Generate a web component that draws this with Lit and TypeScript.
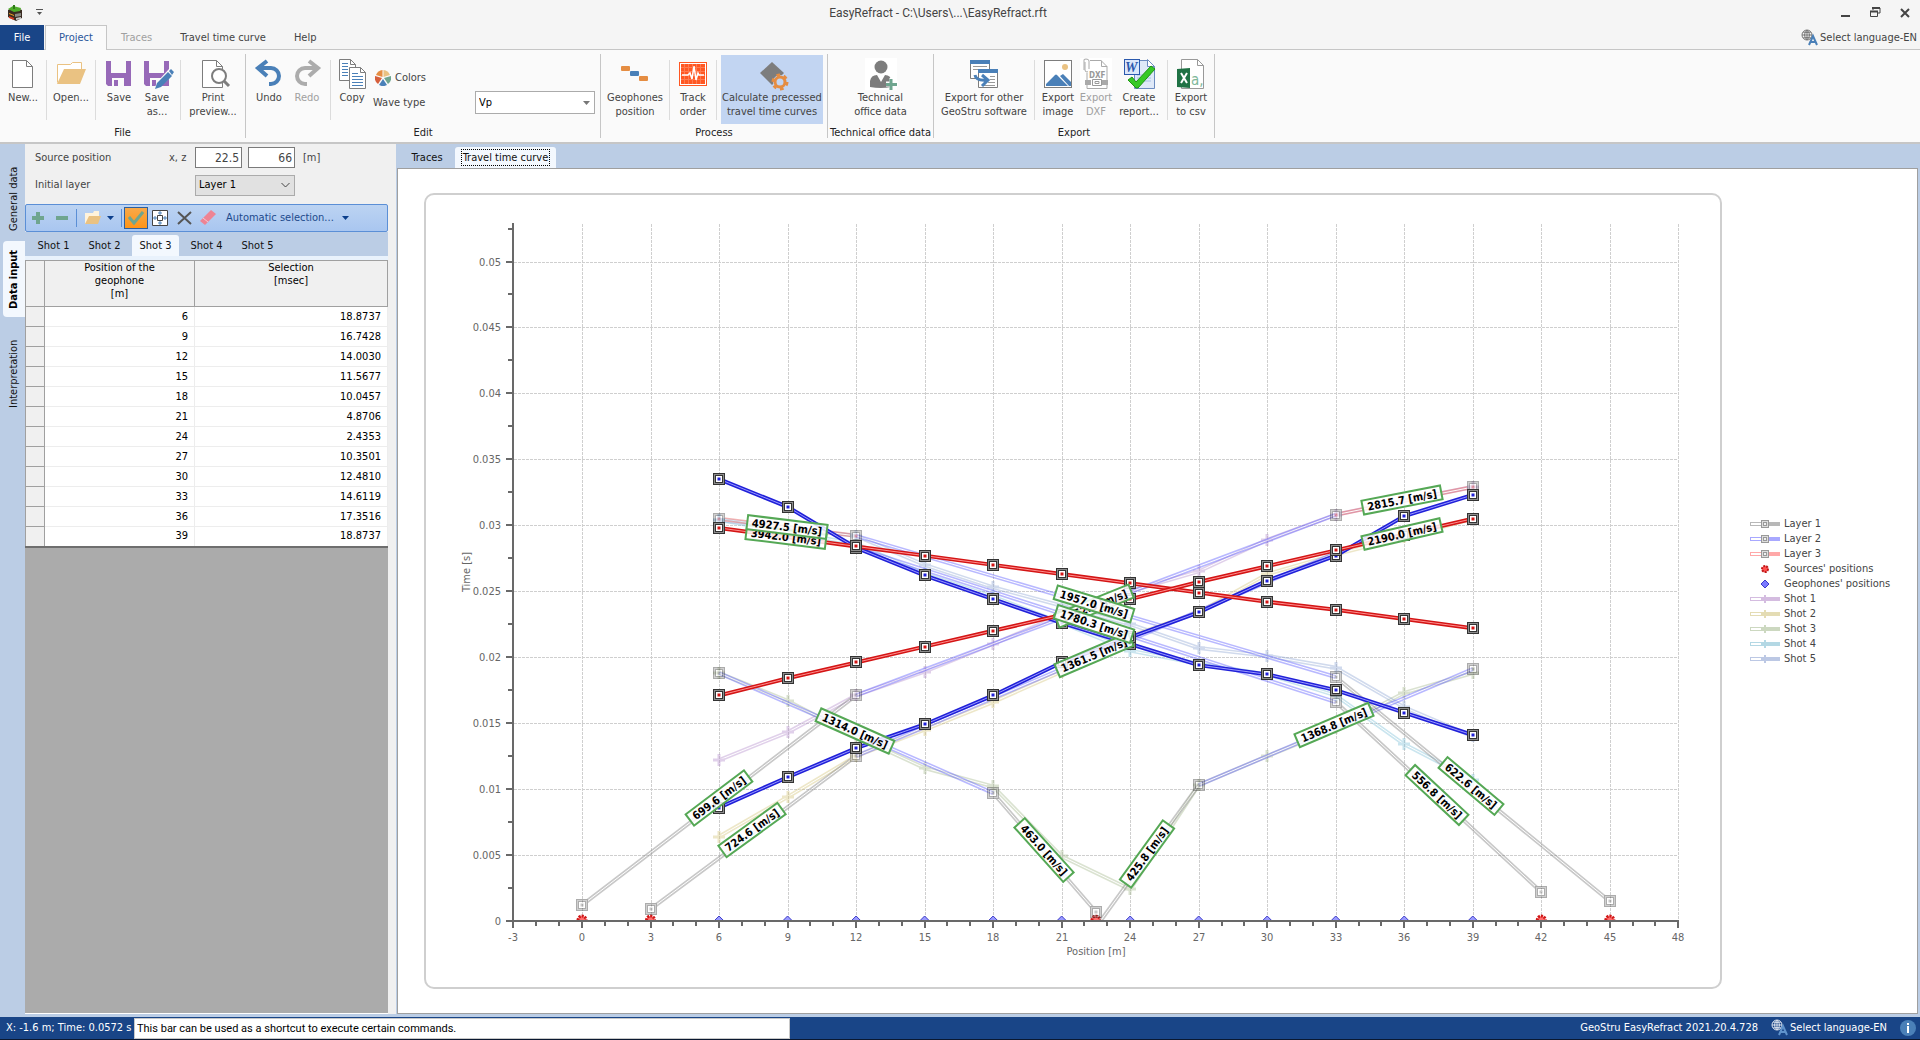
import { html, svg, css, LitElement } from "lit";
import { customElement, property, state } from "lit/decorators.js";
import { classMap } from "lit/directives/class-map.js";

type Point = [number, number];

type Curve = {
    color: string;
    core: string;
    marker: 'box' | 'cross' | 'none';
    faded: boolean;
    points: Point[];
}

type SpeedLabel = {
    text: string;
    x: number;
    y: number;
    angle: number;
}

const icons = {
    new: svg`<path d="M5.5 2.5h14l6 6v21h-20z" fill="#fff" stroke="#7d7d7d"/><path d="M19.5 2.5v6h6" fill="none" stroke="#7d7d7d"/>`,
    open: svg`<path d="M2.500 24.500v-18h13l2-2h9v8" fill="#fff" stroke="#eac282"/><path d="M2 26l7-15h22l-6 15z" fill="#eac282"/>`,
    save: svg`<path d="M3 3h25v25H5l-2-2z" fill="#9769b8"/><path d="M8 3h15v12H8zM9 20h12v8H9z" fill="#fafafa"/><path d="M11 22h4v6h-4z" fill="#9769b8"/>`,
    saveAs: svg`<path d="M3 3h25v25H5l-2-2z" fill="#9769b8"/><path d="M8 3h15v12H8zM9 20h12v8H9z" fill="#fafafa"/><path d="M11 22h4v6h-4z" fill="#9769b8"/>
        <path d="M13 32l3-8L28 11l5 5-13 12z" fill="#fafafa"/><path d="M14 31l2-6 11-11 4 4-11 11zM28 13l2-2 3 3-2 3z" fill="#4a80b8"/>`,
    print: svg`<path d="M5.500 2.500h14l6 6v21h-20z" fill="#fff" stroke="#7d7d7d"/><path d="M19.500 2.500v6h6" fill="none" stroke="#7d7d7d"/>
        <circle cx="22" cy="18" r="7" fill="#fff" stroke="#7d7d7d" stroke-width="2"/><path d="M27 23l5 5" stroke="#7d7d7d" stroke-width="3"/>`,
    undo: svg`<path d="M14 3L5 10l9 8M6 10h12a8 8 0 0 1 0 16h-2" fill="none" stroke="#4a80b8" stroke-width="4"/>`,
    redo: svg`<path d="M18 3l9 7-9 8M26 10H14a8 8 0 0 0 0 16h2" fill="none" stroke="#acacac" stroke-width="4"/>`,
    copy: svg`<path d="M3.500 1.500h11l5 5v16h-16z" fill="#fff" stroke="#7d7d7d"/><path d="M14.500 1.500v5h5" fill="none" stroke="#7d7d7d"/>
        <path d="M6 5.500h6M6 8.500h6M6 11.500h6M6 14.500h6M6 17.500h6" stroke="#4a80b8"/>
        <path d="M13.500 9.500h11l5 5v16h-16z" fill="#fff" stroke="#7d7d7d"/><path d="M24.500 9.500v5h5" fill="none" stroke="#7d7d7d"/>
        <path d="M16 15.500h6M16 18.500h11M16 21.500h11M16 24.500h11M16 27.500h11" stroke="#4a80b8"/>`,
    geophones: svg`<rect x="2" y="8" width="9" height="5" rx="1" fill="#e58d42"/><rect x="11" y="13" width="9" height="5" rx="1" fill="#4a80b8"/><rect x="20" y="18" width="9" height="5" rx="1" fill="#e58d42"/>`,
    track: svg`<rect x="2.500" y="4.500" width="27" height="23" fill="#fff" stroke="#ff5722"/><rect x="4" y="6" width="24" height="20" fill="#ff5722"/>
        <path d="M7.500 6v20M11.500 6v20M15.500 6v20M19.500 6v20M23.500 6v20M4 9.500h24M4 13.500h24M4 17.500h24M4 21.500h24" stroke="#ff7a50"/>
        <path d="M5 17h6l2-2 2 6 2-13 2 14 2-7 1 2h5" fill="none" stroke="#fff" stroke-width="1.500"/>`,
    calculate: svg`<path d="M16 4l12 11-12 12L4 15z" fill="#7d7d7d"/><circle cx="24" cy="24" r="7" fill="#c2d5f2"/>
        <circle cx="24" cy="24" r="5" fill="none" stroke="#e58d42" stroke-width="3"/><circle cx="24" cy="24" r="7" fill="none" stroke="#e58d42" stroke-width="3" stroke-dasharray="3.600 3.730"/>`,
    technical: svg`<rect width="32" height="32" fill="#fff"/><circle cx="16" cy="9" r="6.500" fill="#7d7d7d"/><path d="M5 29v-6q1-6 7-6l4 7 4-7q6 0 6 6v6q-10 2-21 0z" fill="#7d7d7d"/>
        <path d="M27 20v12M21 26h12" stroke="#fff" stroke-width="5"/><path d="M26 21v11M21 26.500h11" stroke="#6fa58f" stroke-width="3"/>`,
    exportOther: svg`<path d="M2.500 2.500h19v18h-19z" fill="#fff" stroke="#7d7d7d"/><path d="M2 2h20v4H2z" fill="#4a80b8"/><path d="M5 8.500h14M5 11.500h14" stroke="#999"/>
        <path d="M10.500 11.500h19v18h-19z" fill="#fff" stroke="#7d7d7d"/><path d="M10 11h20v4H10z" fill="#4a80b8"/><path d="M22 18.500h5M22 21.500h5M20 24.500h7M16 27.500h11" stroke="#999"/>
        <path d="M7 17q1 6 12 5M14 17l6 5-6 6" fill="none" stroke="#4a80b8" stroke-width="3"/>`,
    image: svg`<rect x="2.500" y="2.500" width="27" height="27" fill="#fff" stroke="#7d7d7d"/><circle cx="23" cy="9" r="3" fill="#eac282"/><path d="M4 28v-2l9-9q1-1 2 0l11 11zM18 18l3-2 8 8v4h-2z" fill="#4a80b8"/>`,
    dxf: svg`<rect width="32" height="32" fill="#fff"/><path d="M10 2.500h11l6 6v22H7V15" fill="none" stroke="#aaa"/><path d="M21.500 2.500v6H27M5 4v8q0 2 2 2t2-2V3q0-2-3-2t-2 2v9" fill="none" stroke="#aaa"/>
        <rect x="8" y="11" width="18" height="9" fill="#fff"/><text x="9" y="20" class="tiny" fill="#999">DXF</text><path d="M5 22h6v5H5zM22 22h6v5h-6z" fill="#aaa"/><path d="M12.500 21.500h9v6h-9z" fill="#fff" stroke="#999"/><path d="M15 23.500h4v2h-4z" fill="none" stroke="#999"/>`,
    report: svg`<path d="M11.500 2.500h14l6 6v22h-20z" fill="#dfe9f8" stroke="#6d8cc0"/><path d="M24.500 1.500v7h7z" fill="#fff" stroke="#6d8cc0"/><path d="M14 17h14M14 20h14M14 23h14" stroke="#a9c0e4"/>
        <rect x="1.500" y="1.500" width="15" height="15" fill="#dce7fa" stroke="#2b59ad"/><text x="2" y="14" class="word" fill="#2b59ad">W</text>
        <path d="M5 22l4-3 4 5L28 8l4 3-17 19h-2z" fill="#37c926" stroke="#1f9414"/>`,
    csv: svg`<path d="M6.500 1.500h16l6 6v23h-22z" fill="#fff" stroke="#999"/><path d="M22.500 1.500v6h6" fill="none" stroke="#999"/><path d="M2 11l13-1v20L2 29z" fill="#207245"/>
        <path d="M6 15l6 10M12 15L6 25" stroke="#fff" stroke-width="2"/><text x="16" y="27" class="a" fill="#7fb89a">a,</text>`,
};

const velocityLabels: SpeedLabel[] = [
    { text: '3942.0 [m/s]', x: 360, y: 342, angle: 7 },
    { text: '4927.5 [m/s]', x: 361, y: 332, angle: 7 },
    { text: '2815.7 [m/s]', x: 976, y: 305, angle: -11 },
    { text: '2190.0 [m/s]', x: 976, y: 339, angle: -13 },
    { text: '1352.3 [m/s]', x: 668, y: 411, angle: -22 },
    { text: '1361.5 [m/s]', x: 668, y: 460, angle: -23 },
    { text: '1957.0 [m/s]', x: 668, y: 409, angle: 17 },
    { text: '1780.3 [m/s]', x: 668, y: 429, angle: 18 },
    { text: '1314.0 [m/s]', x: 429, y: 536, angle: 24 },
    { text: '699.6 [m/s]', x: 293, y: 603, angle: -37 },
    { text: '724.6 [m/s]', x: 326, y: 635, angle: -36 },
    { text: '463.0 [m/s]', x: 618, y: 655, angle: 48 },
    { text: '425.8 [m/s]', x: 721, y: 659, angle: -54 },
    { text: '1368.8 [m/s]', x: 908, y: 530, angle: -23 },
    { text: '622.6 [m/s]', x: 1045, y: 591, angle: 40 },
    { text: '556.8 [m/s]', x: 1011, y: 600, angle: 43 },
];

const faded = (color: string, marker: Curve['marker'], points: Point[]): Curve => ({ color, core: '#fff', marker, faded: true, points });
const solid = (color: string, core: string, points: Point[]): Curve => ({ color, core, marker: 'box', faded: false, points });

const GREY = '#777', BLUE = '#5050ff', RED = '#e04040';

// points are [position in m, time in ms]
const curves: Curve[] = [
    faded('#b48ccc', 'cross', [[6, 12.2], [9, 14.3], [12, 17.1], [15, 18.9], [18, 21.0], [21, 23.2], [24, 25.0], [27, 26.5], [30, 28.9], [33, 30.8], [36, 31.9], [39, 32.9]]),
    faded('#d4c478', 'cross', [[6, 6.4], [9, 9.4], [12, 12.5], [15, 14.5], [18, 16.6], [21, 18.9], [24, 21.6], [27, 23.4], [30, 26.3], [33, 27.8], [36, 29.1], [39, 30.5]]),
    faded('#a4b88c', 'cross', [[6, 18.8], [9, 16.7], [12, 14.0], [15, 11.6], [18, 10.2], [21, 4.9], [24, 2.4], [27, 10.3], [30, 12.5], [33, 14.6], [36, 17.3], [39, 18.8]]),
    faded('#7cc0d8', 'cross', [[6, 30.4], [12, 28.6], [15, 26.3], [18, 24.6], [21, 22.6], [24, 20.5], [27, 19.5], [30, 18.7], [33, 17.1], [36, 13.4], [39, 10.7]]),
    faded('#8ca4d4', 'cross', [[6, 30.4], [12, 29.2], [15, 27.0], [18, 25.3], [21, 23.9], [24, 22.5], [27, 20.7], [30, 20.1], [33, 19.2], [36, 16.2], [39, 14.0]]),
    faded(BLUE, 'none', [[12, 17.1], [33, 30.8]]),
    faded(BLUE, 'none', [[12, 12.5], [33, 27.9]]),
    faded(BLUE, 'none', [[6, 18.8], [18, 9.7]]),
    faded(BLUE, 'none', [[27, 10.3], [39, 19.1]]),
    faded(BLUE, 'none', [[12, 29.2], [33, 18.5]]),
    faded(BLUE, 'none', [[12, 28.3], [33, 16.6]]),
    faded(RED, 'box', [[6, 30.5], [12, 29.2]]),
    faded(RED, 'box', [[33, 30.8], [39, 32.9]]),
    faded(GREY, 'box', [[0, 1.2], [12, 17.1]]),
    faded(GREY, 'box', [[3, 0.9], [12, 12.5]]),
    faded(GREY, 'box', [[18, 9.7], [22.5, 0.7]]),
    faded(GREY, 'none', [[22.7, 0], [27, 10.3]]),
    faded(GREY, 'box', [[33, 18.5], [45, 1.5]]),
    faded(GREY, 'box', [[33, 16.6], [42, 2.2]]),
    faded(GREY, 'box', [[6, 18.8]]),
    faded(GREY, 'box', [[27, 10.3]]),
    faded(GREY, 'box', [[39, 19.1]]),
    solid('#2020d8', '#9a9aff', [[6, 33.5], [9, 31.4], [12, 28.3], [15, 26.2], [18, 24.4], [21, 22.6], [24, 21.0], [27, 19.4], [30, 18.7], [33, 17.5], [36, 15.8], [39, 14.1]]),
    solid('#2020d8', '#9a9aff', [[6, 8.6], [9, 10.9], [12, 13.1], [15, 14.9], [18, 17.1], [21, 19.6], [24, 21.5], [27, 23.4], [30, 25.8], [33, 27.7], [36, 30.7], [39, 32.3]]),
    solid('#d41414', '#ff9090', [[6, 29.8], [12, 28.4], [15, 27.7], [18, 27.0], [21, 26.3], [24, 25.6], [27, 24.9], [30, 24.2], [33, 23.6], [36, 22.9], [39, 22.2]]),
    solid('#d41414', '#ff9090', [[6, 17.1], [9, 18.4], [12, 19.6], [15, 20.8], [18, 22.0], [21, 23.2], [24, 24.4], [27, 25.7], [30, 26.9], [33, 28.1], [36, 29.3], [39, 30.5]]),
];

@customElement("travel-chart")
export class TravelChart extends LitElement {
    static styles = css`
        :host {
            display: block;
        }
        svg {
            display: block;
            width: 100%;
            font: 11px "DejaVu Sans Condensed", "DejaVu Sans", sans-serif;
        }
        text {
            fill: #666;
        }
        .end {
            text-anchor: end;
        }
        .mid {
            text-anchor: middle;
        }
        .grid {
            stroke: #cfcfcf;
            stroke-dasharray: 3 1;
            fill: none;
            shape-rendering: crispEdges;
        }
        .axis {
            stroke: #696969;
            stroke-width: 2;
            fill: none;
            shape-rendering: crispEdges;
        }
        .outer {
            fill: none;
            stroke-width: 4;
        }
        .core {
            fill: none;
            stroke-width: 1;
        }
        .faded {
            opacity: 0.4;
        }
        .speed rect {
            fill: rgba(255, 255, 255, 0.85);
            stroke: #55a855;
            stroke-width: 2;
        }
        .speed text {
            fill: #000;
            font-weight: bold;
        }
    `;

    px(m: number) {
        return 156 + m * 22.84;
    }
    py(ms: number) {
        return 726 - ms * 13.19;
    }

    marker(kind: string, color: string, px: number, py: number) {
        const x = Math.round(px);
        const y = Math.round(py);
        if (kind === 'cross') {
            return svg`<path d="M${x - 6} ${y}h12M${x} ${y - 6}v12" stroke=${color} stroke-width="3"/>`;
        }
        return svg`
            <rect x=${x - 5.5} y=${y - 5.5} width="11" height="11" fill="#8c8c8c" stroke="#333"/>
            <rect x=${x - 3.5} y=${y - 3.5} width="7" height="7" fill="#fff" stroke="#333"/>
            <rect x=${x - 1.5} y=${y - 1.5} width="3" height="3" fill=${color}/>`;
    }

    curve(c: Curve) {
        const line = c.points.map(([m, t]) => `${this.px(m)},${this.py(t)}`).join(' ');
        return svg`
            <g class=${c.faded ? 'faded' : ''}>
                <polyline class="outer" points=${line} stroke=${c.color}/>
                <polyline class="core" points=${line} stroke=${c.core}/>
                ${c.marker === 'none' ? '' : c.points.map(([m, t]) => this.marker(c.marker, c.color, this.px(m), this.py(t)))}
            </g>`;
    }

    render() {
        const xMajor = Array.from({ length: 18 }, (_, i) => -3 + i * 3);
        const xMinor = Array.from({ length: 52 }, (_, i) => -3 + i);
        const yMajor = Array.from({ length: 11 }, (_, i) => i * 5);
        const yMinor = Array.from({ length: 11 }, (_, i) => 2.5 + i * 5);
        return html`
            <svg viewBox="0 0 1294 792" role="img" aria-label="Travel time curve">
                <defs>
                    <clipPath id="plot"><rect x="80" y="20" width="1180" height="706"/></clipPath>
                </defs>
                ${xMajor.slice(1).map(m => svg`<path class="grid" d="M${Math.round(this.px(m)) + 0.5} 29V726"/>`)}
                ${yMajor.slice(1).map(t => svg`<path class="grid" d="M88 ${Math.round(this.py(t)) + 0.5}H1252"/>`)}
                <g clip-path="url(#plot)">
                    ${[0, 3, 22.5, 42, 45].map(m => svg`<circle cx=${this.px(m)} cy="725" r="4" fill="#ff7070" stroke="#d01818" stroke-width="3" stroke-dasharray="2 1"/>`)}
                    ${Array.from({ length: 12 }, (_, i) => 6 + i * 3).map(m => svg`<path d="M${this.px(m) - 5} 726l5-5 5 5-5 5z" fill="#9a9aff" stroke="#3c3cc8"/>`)}
                    ${curves.map(c => this.curve(c))}
                </g>
                <path class="axis" d="M87 28V727M80 726H1253"/>
                ${xMajor.map(m => svg`<path class="axis" d="M${Math.round(this.px(m))} 726v7"/><text class="mid" x=${Math.round(this.px(m))} y="746">${m}</text>`)}
                ${xMinor.map(m => svg`<path class="axis" d="M${Math.round(this.px(m))} 726v5"/>`)}
                ${yMajor.map(t => svg`<path class="axis" d="M80 ${Math.round(this.py(t))}h7"/><text class="end" x="75" y=${Math.round(this.py(t)) + 4}>${t / 1000}</text>`)}
                ${yMinor.map(t => svg`<path class="axis" d="M82 ${Math.round(this.py(t))}h5"/>`)}
                <text class="mid" x="670" y="760">Position [m]</text>
                <text class="mid" transform="translate(44 377) rotate(-90)">Time [s]</text>
                ${velocityLabels.map(l => {
                    const w = l.text.length > 11 ? 80 : 73;
                    return svg`
                        <g class="speed" transform="translate(${l.x} ${l.y}) rotate(${l.angle})">
                            <rect x=${-w / 2} y="-7" width=${w} height="14"/>
                            <text class="mid" y="4">${l.text}</text>
                        </g>`;
                })}
            </svg>
        `;
    }
}

@customElement("ribbon-button")
export class RibbonButton extends LitElement {
    static styles = css`
        :host {
            display: block;
        }
        button {
            display: flex;
            flex-direction: column;
            align-items: center;
            gap: 1px;
            width: 100%;
            height: 69px;
            padding: 3px 0 0;
            border: none;
            background: none;
            font: 11px/14px "DejaVu Sans Condensed", "DejaVu Sans", sans-serif;
            color: #444;
            white-space: pre;
        }
        button:disabled {
            color: #a0a0a0;
        }
        .active {
            background: #c2d5f2;
        }
        svg {
            width: 32px;
            height: 32px;
            overflow: visible;
            flex: none;
        }
        .tiny {
            font: bold 8px "DejaVu Sans Condensed", sans-serif;
        }
        .word {
            font: italic bold 14px "Liberation Serif", serif;
        }
        .a {
            font: 15px "DejaVu Sans Condensed", sans-serif;
        }
    `;
    @property() icon: keyof typeof icons = 'new';
    @property() label = '';
    @property({ type: Boolean }) active = false;
    @property({ type: Boolean }) disabled = false;

    render() {
        return html`<button class=${classMap({ active: this.active })} ?disabled=${this.disabled}><svg viewBox="0 0 32 32">${icons[this.icon]}</svg><span>${this.label}</span></button>`;
    }
}

const globe = svg`<circle cx="6" cy="6" r="5" fill="none"/><path d="M6 1v10M1 6h10M2 3q4 1 8 0M2 9q4-1 8 0M6 1q-5 5 0 10M6 1q5 5 0 10" fill="none"/>`;

@customElement("app-root")
export class AppRoot extends LitElement {
    static styles = css`
        :host {
            display: flex;
            flex-direction: column;
            min-height: 100vh;
            font: 11px/14px "DejaVu Sans Condensed", "DejaVu Sans", sans-serif;
            color: #444;
            background: #bbcde5;
        }
        * {
            box-sizing: border-box;
        }
        button, input, select {
            font: inherit;
            color: inherit;
            margin: 0;
        }
        button {
            border: none;
            background: none;
            padding: 0;
        }
        svg {
            display: block;
            flex: none;
        }
        .titlebar {
            display: grid;
            grid-template-columns: 1fr auto 1fr;
            align-items: center;
            height: 25px;
            padding: 0 10px 0 8px;
            background: #f5f5f5;
        }
        .title {
            padding-right: 42px;
            font: 12px/16px Roboto, sans-serif;
        }
        .quick {
            display: flex;
            align-items: center;
            gap: 14px;
        }
        .window {
            display: flex;
            justify-content: flex-end;
            gap: 19px;
        }
        .menubar {
            display: flex;
            height: 25px;
            background: #f5f5f5;
            box-shadow: inset 0 -1px #c6c6c6;
        }
        .menubar .tab {
            padding: 0 14px;
        }
        .menubar .file {
            width: 44px;
            padding: 0;
            background: #194587;
            color: #fff;
        }
        .menubar .current {
            width: 62px;
            margin-left: 1px;
            padding: 0;
            border: 1px solid #c6c6c6;
            border-bottom: none;
            background: #fafafa;
            color: #2a579a;
        }
        .menubar .off {
            color: #a0a0a0;
        }
        .language {
            display: flex;
            align-items: center;
            gap: 2px;
        }
        .menubar .language {
            margin-left: auto;
            padding-right: 3px;
        }
        .ribbon {
            display: flex;
            height: 94px;
            padding: 4px 0;
            background: #fafafa;
            border-bottom: 2px solid #c6c6c6;
        }
        .group {
            display: flex;
            flex-direction: column;
            justify-content: space-between;
            border-right: 1px solid #c6c6c6;
        }
        .group .row {
            display: flex;
            padding-top: 1px;
        }
        .caption {
            text-align: center;
            color: #222;
            line-height: 10px;
            white-space: nowrap;
        }
        .sep {
            width: 1px;
            height: 60px;
            margin-top: 5px;
            background: #dcdcdc;
        }
        .inset {
            display: flex;
            padding: 0 4px;
        }
        .w38 { width: 38px; }
        .w42 { width: 42px; }
        .w46 { width: 46px; }
        .w48 { width: 48px; }
        .w64 { width: 64px; }
        .w68 { width: 68px; }
        .w100 { width: 100px; }
        .w102 { width: 102px; }
        .w105 { width: 105px; }
        .wave {
            display: grid;
            grid-template-columns: 102px 120px;
            align-content: start;
            row-gap: 4px;
            align-items: center;
            padding: 14px 5px 0 0;
        }
        .colors {
            grid-column: 1 / 3;
            display: flex;
            align-items: center;
            gap: 4px;
            padding-left: 2px;
            height: 18px;
        }
        .combo {
            display: grid;
            align-items: center;
        }
        .combo > * {
            grid-area: 1 / 1;
        }
        .combo svg {
            justify-self: end;
            margin-right: 5px;
            pointer-events: none;
        }
        .combo select {
            appearance: none;
            width: 100%;
            height: 23px;
            padding: 0 3px;
            border: 1px solid #ababab;
            border-radius: 0;
            background: #fff;
            color: #000;
        }
        .workspace {
            flex: 1;
            display: flex;
            padding: 0 2px 3px 0;
        }
        .rail {
            display: flex;
            flex-direction: column;
            align-items: flex-end;
            width: 25px;
            padding-top: 13px;
        }
        .rail button {
            writing-mode: vertical-rl;
            transform: rotate(180deg);
            width: 22px;
            height: 84px;
            color: #111;
        }
        .rail .current {
            height: 76px;
            border-radius: 0 4px 4px 0;
            background: #f3f8fe;
            font-weight: bold;
            color: #000;
        }
        .rail .last {
            height: 114px;
        }
        .side {
            display: flex;
            flex-direction: column;
            width: 371px;
            margin-right: 1px;
            padding-right: 8px;
            background: #f0f0f0;
        }
        .form {
            display: grid;
            grid-template-columns: 134px 26px 100px 1fr;
            grid-template-rows: 21px 22px;
            gap: 6px 0;
            align-items: center;
            padding: 3px 0 8px 10px;
        }
        .form input {
            flex: 1;
            min-width: 0;
            height: 21px;
            padding: 0 2px;
            border: 1px solid #7a7a7a;
            text-align: right;
            font-size: 12px;
            background: #fff;
        }
        .form .gap {
            padding-left: 8px;
        }
        .pair {
            display: flex;
            gap: 6px;
        }
        .form .combo select {
            background: #e1e1e1;
            height: 21px;
        }
        .toolbar {
            display: flex;
            align-items: center;
            height: 28px;
            border: 1px solid #5b8fd6;
            border-radius: 2px;
            background: linear-gradient(#bcd3f2, #a9c6f0);
            color: #1e4a8c;
        }
        .toolbar button {
            display: flex;
            align-items: center;
            justify-content: center;
            gap: 8px;
            width: 24px;
            height: 22px;
        }
        .toolbar .checked {
            border: 1px solid #2c5f9e;
            background: linear-gradient(#f7a94a, #ff9416);
        }
        .toolbar .folder {
            width: 40px;
            gap: 6px;
        }
        .toolbar .auto {
            width: auto;
            padding-left: 6px;
        }
        .toolbar i {
            width: 1px;
            height: 18px;
            margin: 0 2px;
            background: #5b8fd6;
        }
        .tabs {
            display: flex;
            align-items: flex-end;
            background: #bbcde5;
            color: #111;
        }
        .shots {
            height: 28px;
            padding: 0 0 0 5px;
            gap: 4px;
            border-bottom: 4px solid #e9f2fc;
        }
        .tabs button {
            height: 21px;
            width: 47px;
            border-radius: 3px 3px 0 0;
        }
        .tabs .current {
            background: #f3f8fe;
        }
        .holder {
            flex: 1;
            background: #ababab;
            border-bottom: 1px solid #fff;
        }
        table {
            width: 100%;
            border-collapse: collapse;
            table-layout: fixed;
            background: #fff;
            color: #000;
            border-bottom: 2px solid #6e6e6e;
        }
        .mark {
            width: 19px;
        }
        .pos {
            width: 150px;
        }
        th {
            padding: 0;
            background: #f0f0f0;
            border: 1px solid #a0a0a0;
            font-weight: normal;
            line-height: 13px;
            vertical-align: top;
        }
        thead tr {
            height: 46px;
        }
        tbody tr {
            height: 20px;
        }
        td {
            padding: 0 6px;
            text-align: right;
            border: 1px solid #ededed;
        }
        .main {
            flex: 1;
            display: flex;
            flex-direction: column;
            min-width: 0;
        }
        .main .tabs {
            height: 24px;
            padding-left: 4px;
            gap: 2px;
        }
        .main .tabs button {
            width: 52px;
            height: 21px;
        }
        .main .tabs .current {
            width: 101px;
        }
        .current span {
            outline: 1px dotted #000;
            outline-offset: 1px;
        }
        .canvas {
            flex: 1;
            display: flex;
            align-items: flex-start;
            padding: 24px 0 24px 26px;
            border: 1px solid #9f9f9f;
            background: #fff;
        }
        .frame {
            flex: 1;
            border: 2px solid #cfcfcf;
            border-radius: 10px;
        }
        .legend {
            align-self: center;
            width: 195px;
            margin: 0;
            padding: 0 0 0 28px;
            list-style: none;
            line-height: 15px;
        }
        .legend li {
            display: flex;
            align-items: center;
            gap: 4px;
        }
        .status {
            display: flex;
            align-items: center;
            height: 23px;
            padding: 0 4px 0 6px;
            background: #194587;
            border-bottom: 1px solid #0a1830;
            color: #fff;
        }
        .status .coords {
            width: 128px;
            white-space: nowrap;
        }
        .status input {
            width: 656px;
            height: 21px;
            padding: 0 2px;
            border: 1px solid #c8c8c8;
            background: #fff;
            color: #000;
            font-family: Roboto, sans-serif;
        }
        .status .right {
            display: flex;
            align-items: center;
            gap: 13px;
            margin-left: auto;
        }
    `;

    @state() shot = 3;
    @property({ type: Array }) rows: [number, string][] = [
        [6, '18.8737'], [9, '16.7428'], [12, '14.0030'], [15, '11.5677'],
        [18, '10.0457'], [21, '4.8706'], [24, '2.4353'], [27, '10.3501'],
        [30, '12.4810'], [33, '14.6119'], [36, '17.3516'], [39, '18.8737'],
    ];

    legend: { name: string; kind: string; color: string }[] = [
        { name: 'Layer 1', kind: 'box', color: '#b8b8b8' },
        { name: 'Layer 2', kind: 'box', color: '#a8a8ff' },
        { name: 'Layer 3', kind: 'box', color: '#ffa8a8' },
        { name: "Sources' positions", kind: 'source', color: '#e03030' },
        { name: "Geophones' positions", kind: 'geophone', color: '#7a7aff' },
        { name: 'Shot 1', kind: 'cross', color: '#d4bce0' },
        { name: 'Shot 2', kind: 'cross', color: '#e4dcb4' },
        { name: 'Shot 3', kind: 'cross', color: '#ccd8c0' },
        { name: 'Shot 4', kind: 'cross', color: '#b4d8e4' },
        { name: 'Shot 5', kind: 'cross', color: '#bcc8e4' },
    ];

    swatch(kind: string, color: string) {
        const bar = svg`<rect x="0.500" y="4.500" width="29" height="3" fill="#fff" stroke=${color}/><rect x="15" y="5" width="14" height="2" fill=${color}/>`;
        switch (kind) {
            case 'box':
                return svg`${bar}<rect x="11.500" y="2.500" width="7" height="7" fill="#ddd" stroke="#999"/><rect x="13.500" y="4.500" width="3" height="3" fill="#f0f0f0" stroke="#999"/>`;
            case 'cross':
                return svg`${bar}<path d="M11 6h8M15 2v8" stroke=${color} stroke-width="2"/>`;
            case 'source':
                return svg`<circle cx="15" cy="6" r="3" fill="#ff5050" stroke="#c01818" stroke-width="2" stroke-dasharray="2 1"/>`;
            default:
                return svg`<path d="M11 6l4-4 4 4-4 4z" fill=${color} stroke="#3c3cc8"/>`;
        }
    }

    language(line: string, letter: string) {
        return html`
            <button class="language">
                <svg width="17" height="18" viewBox="0 0 17 18"><g stroke=${line}>${globe}</g><path d="M8 16l4-9 4 9M10 13h5" fill="none" stroke=${letter} stroke-width="2"/></svg>
                Select language-EN
            </button>`;
    }

    caret(color: string) {
        return html`<svg width="7" height="4" viewBox="0 0 7 4"><path d="M0 0h7L3.500 4z" fill=${color}/></svg>`;
    }

    renderRibbon() {
        return html`
            <div class="ribbon">
                <div class="group">
                    <div class="row">
                        <ribbon-button class="w46" icon="new" label="New..."></ribbon-button>
                        <div class="sep"></div>
                        <ribbon-button class="w48" icon="open" label="Open..."></ribbon-button>
                        <div class="sep"></div>
                        <div class="inset">
                            <ribbon-button class="w38" icon="save" label="Save"></ribbon-button>
                            <ribbon-button class="w38" icon="saveAs" .label=${'Save\nas...'}></ribbon-button>
                        </div>
                        <div class="sep"></div>
                        <ribbon-button class="w64" icon="print" .label=${'Print\npreview...'}></ribbon-button>
                    </div>
                    <div class="caption">File</div>
                </div>
                <div class="group">
                    <div class="row">
                        <div class="inset">
                            <ribbon-button class="w38" icon="undo" label="Undo"></ribbon-button>
                            <ribbon-button class="w38" icon="redo" label="Redo" disabled></ribbon-button>
                        </div>
                        <div class="sep"></div>
                        <ribbon-button class="w42" icon="copy" label="Copy"></ribbon-button>
                        <div class="wave">
                            <button class="colors">
                                <svg width="16" height="16" viewBox="0 0 16 16">
                                    <path d="M7.500 7V0A8 8 0 0 0 1 5z" fill="#e58d42"/><path d="M8.500 7V0A8 8 0 0 1 15 5z" fill="#eac282"/>
                                    <path d="M7 8L0 6a8 8 0 0 0 3 8z" fill="#d65f3c"/><path d="M9 8l7-2a8 8 0 0 1-3 8z" fill="#6fa58f"/><path d="M8 9l-4 6a8 8 0 0 0 8 0z" fill="#4a80b8"/>
                                    <circle cx="8" cy="8" r="1" fill="#fafafa"/>
                                </svg>
                                Colors
                            </button>
                            <label for="wave">Wave type</label>
                            <div class="combo">
                                <select id="wave"><option>Vp</option><option>Vs</option></select>
                                ${this.caret('#777')}
                            </div>
                        </div>
                    </div>
                    <div class="caption">Edit</div>
                </div>
                <div class="group">
                    <div class="row">
                        <ribbon-button class="w68" icon="geophones" .label=${'Geophones\nposition'}></ribbon-button>
                        <div class="sep"></div>
                        <ribbon-button class="w46" icon="track" .label=${'Track\norder'}></ribbon-button>
                        <div class="sep"></div>
                        <div class="inset">
                            <ribbon-button class="w102" icon="calculate" active .label=${'Calculate precessed\ntravel time curves'}></ribbon-button>
                        </div>
                    </div>
                    <div class="caption">Process</div>
                </div>
                <div class="group">
                    <div class="row">
                        <ribbon-button class="w105" icon="technical" .label=${'Technical\noffice data'}></ribbon-button>
                    </div>
                    <div class="caption">Technical office data</div>
                </div>
                <div class="group">
                    <div class="row">
                        <ribbon-button class="w100" icon="exportOther" .label=${'Export for other\nGeoStru software'}></ribbon-button>
                        <div class="sep"></div>
                        <div class="inset">
                            <ribbon-button class="w38" icon="image" .label=${'Export\nimage'}></ribbon-button>
                            <ribbon-button class="w38" icon="dxf" .label=${'Export\nDXF'} disabled></ribbon-button>
                            <ribbon-button class="w48" icon="report" .label=${'Create\nreport...'}></ribbon-button>
                        </div>
                        <div class="sep"></div>
                        <ribbon-button class="w46" icon="csv" .label=${'Export\nto csv'}></ribbon-button>
                    </div>
                    <div class="caption">Export</div>
                </div>
            </div>
        `;
    }

    renderSide() {
        return html`
            <div class="side">
                <div class="form">
                    <span>Source position</span>
                    <label for="sx">x, z</label>
                    <div class="pair">
                        <input id="sx" value="22.5">
                        <input aria-label="z" value="66">
                    </div>
                    <span class="gap">[m]</span>
                    <label for="layer">Initial layer</label>
                    <span></span>
                    <div class="combo">
                        <select id="layer"><option>Layer 1</option><option>Layer 2</option><option>Layer 3</option></select>
                        <svg width="9" height="6" viewBox="0 0 9 6"><path d="M0.500 1l4 4 4-4" fill="none" stroke="#444"/></svg>
                    </div>
                </div>
                <div class="toolbar">
                    <button aria-label="Add"><svg width="12" height="12"><path d="M6 0v12M0 6h12" stroke="#6fa58f" stroke-width="4"/></svg></button>
                    <button aria-label="Remove"><svg width="12" height="12"><path d="M0 6h12" stroke="#6fa58f" stroke-width="4"/></svg></button>
                    <i></i>
                    <button class="folder" aria-label="Open">
                        <svg width="16" height="14"><path d="M0 13V2h8l1-2h5v5" fill="#fff3dc"/><path d="M0 13l4-8h12l-3 8z" fill="#eac282"/></svg>
                        ${this.caret('#0c3f8c')}
                    </button>
                    <i></i>
                    <button class="checked" aria-label="Pick"><svg width="16" height="14"><path d="M1 6l5 6 9-11" fill="none" stroke="#6fa58f" stroke-width="3"/></svg></button>
                    <button aria-label="Fit"><svg width="16" height="16"><path d="M.5.500h15v15H.5z" fill="#fff" stroke="#444"/><path d="M5.500 5.500h5v5h-5z" fill="none" stroke="#444"/><path d="M8 1v4M8 11v4M1 8h4M11 8h4M6 3h4M6 13h4M3 6v4M13 6v4" stroke="#4a80b8"/></svg></button>
                    <button aria-label="Delete"><svg width="15" height="14"><path d="M1 1l13 12M14 1L1 13" stroke="#555" stroke-width="2"/></svg></button>
                    <button aria-label="Erase"><svg width="16" height="16"><path d="M0 11L11 0l5 4L5 15z" fill="#ee8494"/><path d="M3 8l5 4" stroke="#f7c8d0"/></svg></button>
                    <button class="auto">Automatic selection... ${this.caret('#0c3f8c')}</button>
                </div>
                <div class="tabs shots">
                    ${[1, 2, 3, 4, 5].map(n => html`<button class=${classMap({ current: n === this.shot })} @click=${() => { this.shot = n; }}>Shot ${n}</button>`)}
                </div>
                <div class="holder">
                    <table>
                        <thead>
                            <tr>
                                <th class="mark"></th>
                                <th class="pos">Position of the<br>geophone<br>[m]</th>
                                <th>Selection<br>[msec]</th>
                            </tr>
                        </thead>
                        <tbody>
                            ${this.rows.map(([pos, sel]) => html`<tr><th></th><td>${pos}</td><td>${sel}</td></tr>`)}
                        </tbody>
                    </table>
                </div>
            </div>
        `;
    }

    render() {
        return html`
            <div class="titlebar">
                <div class="quick">
                    <svg width="14" height="16" viewBox="0 0 14 16">
                        <path d="M0 5l6-3 8 3v8l-6 3-8-4z" fill="#3a2c22"/><path d="M0 4l5-3 8 2-1 3-6 1z" fill="#4fae2a"/><path d="M5 0h2v4H5z" fill="#2f7a18"/>
                        <path d="M1 8l5 2v1L1 9z" fill="#f0a020"/><path d="M1 11l5 2v2l-5-2z" fill="#d03a20"/><path d="M7 9l6-1v3l-6 1z" fill="#8a8a84"/><path d="M8 13l5-1v2l-5 1z" fill="#c8c8c8"/>
                    </svg>
                    <svg width="8" height="7" viewBox="0 0 8 7"><path d="M0 .5h7" stroke="#555"/><path d="M1 3h5L3.500 6z" fill="#555"/></svg>
                </div>
                <div class="title">EasyRefract - C:\\Users\\...\\EasyRefract.rft</div>
                <div class="window">
                    <button aria-label="Minimize"><svg width="10" height="10"><path d="M0 8h9" stroke="#444" stroke-width="2"/></svg></button>
                    <button aria-label="Restore"><svg width="11" height="11"><path d="M3 3V1h7v5H8" fill="none" stroke="#444" stroke-width="1"/><path d="M.5 4.500h7v5h-7z" fill="none" stroke="#444"/><path d="M0 4.500h8M2 1h8" stroke="#444" stroke-width="2"/></svg></button>
                    <button aria-label="Close"><svg width="10" height="10"><path d="M1 1l8 8M9 1L1 9" stroke="#444" stroke-width="2"/></svg></button>
                </div>
            </div>
            <div class="menubar">
                <button class="tab file">File</button>
                <button class="tab current">Project</button>
                <button class="tab off" disabled>Traces</button>
                <button class="tab">Travel time curve</button>
                <button class="tab">Help</button>
                ${this.language('#777', '#4a80b8')}
            </div>
            ${this.renderRibbon()}
            <div class="workspace">
                <div class="rail">
                    <button>General data</button>
                    <button class="current">Data input</button>
                    <button class="last">Interpretation</button>
                </div>
                ${this.renderSide()}
                <div class="main">
                    <div class="tabs">
                        <button>Traces</button>
                        <button class="current"><span>Travel time curve</span></button>
                    </div>
                    <div class="canvas">
                        <div class="frame"><travel-chart></travel-chart></div>
                        <ul class="legend">
                            ${this.legend.map(l => html`<li><svg width="30" height="12">${this.swatch(l.kind, l.color)}</svg>${l.name}</li>`)}
                        </ul>
                    </div>
                </div>
            </div>
            <div class="status">
                <span class="coords">X: -1.6 m; Time: 0.0572 s</span>
                <input aria-label="Command" value="This bar can be used as a shortcut to execute certain commands.">
                <div class="right">
                    <span>GeoStru EasyRefract 2021.20.4.728</span>
                    ${this.language('#d8e0ec', '#5f93cc')}
                    <svg width="16" height="16" viewBox="0 0 16 16"><circle cx="8" cy="8" r="8" fill="#4a80b8"/><path d="M8 3v2M8 6v7" stroke="#fff" stroke-width="2"/></svg>
                </div>
            </div>
        `;
    }
}

declare global {
    interface HTMLElementTagNameMap {
        'app-root': AppRoot;
        'ribbon-button': RibbonButton;
        'travel-chart': TravelChart;
    }
}
